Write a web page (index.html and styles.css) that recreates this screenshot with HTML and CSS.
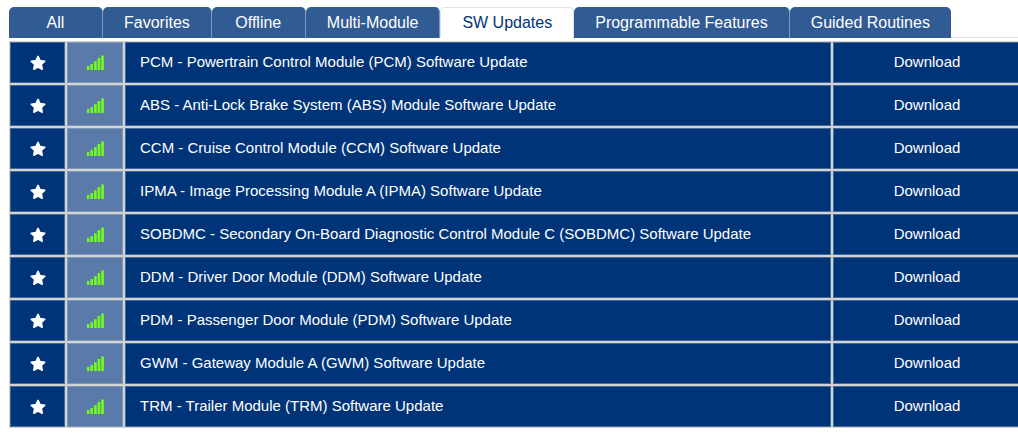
FILE: index.html
```html
<!DOCTYPE html>
<html lang="en">
<head>
    <meta charset="UTF-8">
    <meta name="viewport" content="width=device-width, initial-scale=1.0">
    <title>SW Updates</title>
    <link rel="stylesheet" href="styles.css">
</head>
<body>

<svg class="symbols" aria-hidden="true">
    <symbol id="star" viewBox="0 0 16 16">
        <path d="M8 1.4 L10 5.6 L14.8 6.2 L11.3 9.5 L12.2 14.2 L8 12 L3.8 14.2 L4.7 9.5 L1.2 6.2 L6 5.6 Z" fill="#fff" stroke="#fff" stroke-width="1.6" stroke-linejoin="round"/>
    </symbol>
    <symbol id="signal" viewBox="0 0 17 15">
        <path d="M0 11h2.4v4H0z M3.4 9h2.6v6H3.4z M7 6.2h2.7v8.8H7z M10.6 3h2.7v12h-2.7z M14.2 0.4h2.7v14.6h-2.7z" fill="#72fa1c"/>
    </symbol>
</svg>

<div class="page">
    <div class="tabs" role="tablist">
        <button class="tab" role="tab">All</button>
        <button class="tab" role="tab">Favorites</button>
        <button class="tab" role="tab">Offline</button>
        <button class="tab" role="tab">Multi-Module</button>
        <button class="tab active" role="tab" aria-selected="true">SW Updates</button>
        <button class="tab" role="tab">Programmable Features</button>
        <button class="tab" role="tab">Guided Routines</button>
    </div>

    <table class="updates">
        <colgroup>
            <col class="col-star">
            <col class="col-signal">
            <col>
            <col class="col-action">
        </colgroup>
        <tbody id="update-rows"></tbody>
    </table>
</div>

<script src="updates.js"></script>
</body>
</html>
```
FILE: styles.css
```css
body {
    margin: 0;
    background: #fff;
    font-family: "Liberation Sans", Arial, sans-serif;
    font-size: 15px;
    overflow-x: hidden;
}
button {
    font-family: inherit;
    font-size: inherit;
    color: inherit;
    background: none;
    border: none;
    margin: 0;
    padding: 0;
    cursor: pointer;
}
.symbols {
    display: none;
}
.page {
    padding-top: 7px;
    margin: 0 -4px 0 9px;
}
.tabs {
    display: flex;
    margin-bottom: 3px;
    background: linear-gradient(#dee2e6, #dee2e6) 0 100% / 100% 1px no-repeat;
}
.tab {
    height: 31px;
    min-width: 94px;
    padding: 0 21px;
    background: #305b93;
    border-right: 1px solid #8299bc;
    border-radius: 5px 5px 0 0;
    color: #fff;
    font-size: 16px;
    line-height: 31px;
    white-space: nowrap;
}
.tab:last-child {
    border-right: none;
}
.tab.active {
    background: #fff;
    border: 1px solid #dee2e6;
    border-bottom: none;
    color: #003478;
    line-height: 30px;
}
.updates {
    width: 100%;
    table-layout: fixed;
    border-collapse: separate;
    border-spacing: 0;
    color: #fff;
}
.col-star {
    width: 57px;
}
.col-signal {
    width: 58px;
}
.col-action {
    width: 190px;
}
.updates td {
    box-sizing: border-box;
    height: 43px;
    padding: 0;
    background: #003478;
    border: 1px solid #d3d3d3;
    box-shadow: inset 0 0 0 1px #456a98;
    line-height: 20px;
    text-align: center;
    vertical-align: middle;
}
.updates .signal {
    background: #5a7ba9;
    box-shadow: inset 0 0 0 1px #8199b9;
}
.updates .name {
    padding: 0 15px 2px;
    text-align: left;
}
.updates .action {
    padding-bottom: 2px;
}
.action button {
    line-height: 20px;
}
.favorite button {
    display: block;
    margin: 0 auto;
}
.updates svg {
    display: block;
    margin: 0 auto;
}
```
FILE: updates.js
```js
const updates = [
    "PCM - Powertrain Control Module (PCM) Software Update",
    "ABS - Anti-Lock Brake System (ABS) Module Software Update",
    "CCM - Cruise Control Module (CCM) Software Update",
    "IPMA - Image Processing Module A (IPMA) Software Update",
    "SOBDMC - Secondary On-Board Diagnostic Control Module C (SOBDMC) Software Update",
    "DDM - Driver Door Module (DDM) Software Update",
    "PDM - Passenger Door Module (PDM) Software Update",
    "GWM - Gateway Module A (GWM) Software Update",
    "TRM - Trailer Module (TRM) Software Update"
];

document.getElementById("update-rows").innerHTML = updates.map(name => `
    <tr>
        <td class="favorite"><button aria-label="Favorite"><svg width="16" height="16"><use href="#star"/></svg></button></td>
        <td class="signal"><svg width="17" height="15" role="img" aria-label="Online"><use href="#signal"/></svg></td>
        <td class="name">${name}</td>
        <td class="action"><button>Download</button></td>
    </tr>`).join("");
```
